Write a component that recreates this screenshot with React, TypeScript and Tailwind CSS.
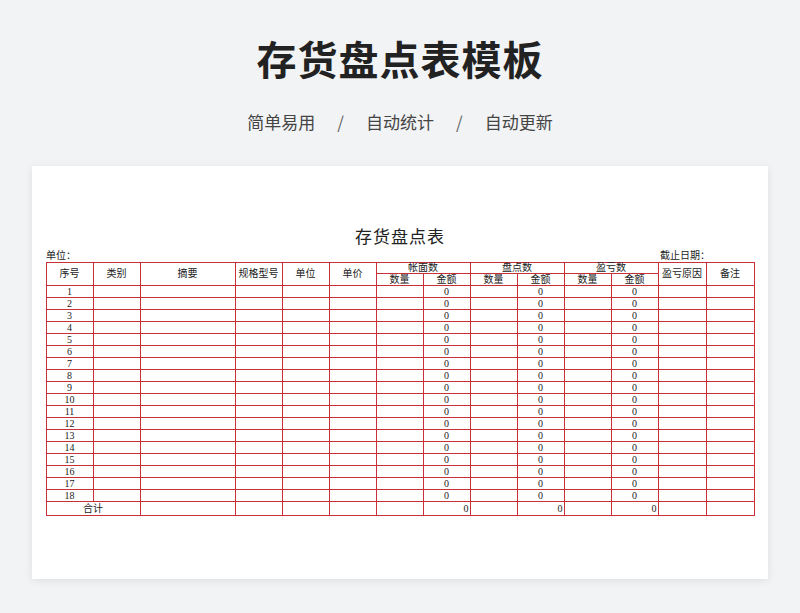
import React from "react";

const B = "border border-[#c9303a] p-0 font-normal";
const widths = [47, 47, 95, 47, 47, 47, 47, 47, 47, 47, 47, 47, 48, 48];

export default function App() {
  const rows = Array.from({ length: 18 }, (_, i) => i + 1);
  return (
    <div className="w-[800px] h-[613px] bg-[#f2f3f5] flex flex-col items-center" style={{ fontFamily: '"Noto Sans CJK SC", sans-serif' }}>
      <h1 className="mt-[32px] text-[40px] leading-[52px] font-bold text-[#222] tracking-[1px]">存货盘点表模板</h1>
      <div className="mt-[26px] flex items-center gap-[22px] text-[17px] leading-[24px] text-[#444]">
        <span>简单易用</span><span className="text-[#666]">/</span>
        <span>自动统计</span><span className="text-[#666]">/</span>
        <span>自动更新</span>
      </div>
      <div className="mt-[32px] w-[736px] h-[413px] bg-white shadow-[0_2px_8px_rgba(0,0,0,0.08)] flex flex-col items-center" style={{ fontFamily: '"Liberation Serif", "Noto Sans CJK SC", serif' }}>
        <div className="mt-[61px] text-[17px] leading-[22px] text-[#222] tracking-[1px]">存货盘点表</div>
        <div className="w-[708px] flex justify-between text-[10px] leading-[12px] text-[#222] mt-[1px]">
          <span>单位：</span><span className="mr-[44px]">截止日期：</span>
        </div>
        <table className="border-collapse table-fixed text-[10px] leading-none text-[#222] w-[708px]">
          <colgroup>{widths.map((w, i) => <col key={i} style={{ width: w }} />)}</colgroup>
          <thead>
            <tr className="h-[11px]">
              {["序号", "类别", "摘要", "规格型号", "单位", "单价"].map(t => (
                <th key={t} rowSpan={2} className={B}>{t}</th>
              ))}
              <th colSpan={2} className={B}>帐面数</th>
              <th colSpan={2} className={B}>盘点数</th>
              <th colSpan={2} className={B}>盈亏数</th>
              <th rowSpan={2} className={B}>盈亏原因</th>
              <th rowSpan={2} className={B}>备注</th>
            </tr>
            <tr className="h-[12px]">
              {["数量", "金额", "数量", "金额", "数量", "金额"].map((t, i) => <th key={i} className={B}>{t}</th>)}
            </tr>
          </thead>
          <tbody>
            {rows.map(r => (
              <tr key={r} className="h-[12px]">
                {widths.map((_, i) => (
                  <td key={i} className={B + " text-center"}>
                    {i === 0 ? r : i === 7 || i === 9 || i === 11 ? "0" : ""}
                  </td>
                ))}
              </tr>
            ))}
            <tr className="h-[14px]">
              <td colSpan={2} className={B + " text-center"}>合计</td>
              {[2, 3, 4, 5, 6, 7, 8, 9, 10, 11, 12, 13].map(i => (
                <td key={i} className={B + " text-right pr-[1px]"}>{i === 7 || i === 9 || i === 11 ? "0" : ""}</td>
              ))}
            </tr>
          </tbody>
        </table>
      </div>
    </div>
  );
}
